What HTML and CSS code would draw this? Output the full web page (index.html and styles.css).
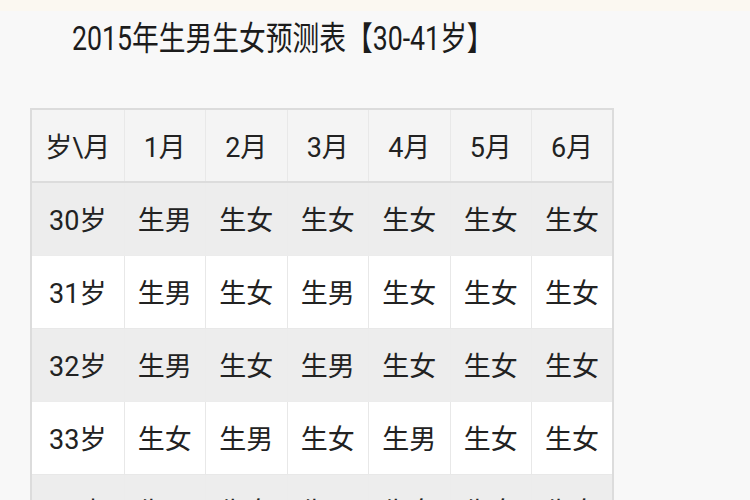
FILE: index.html
```html
<!DOCTYPE html>
<html lang="zh">
<head>
<meta charset="utf-8">
<link rel="stylesheet" href="styles.css">
</head>
<body>
<div class="band"></div>
<h1 class="title"><span class="title-text">2015年生男生女预测表【30-41岁】</span></h1>
<table class="chart">
  <thead>
    <tr><th class="first">岁\月</th><th>1月</th><th>2月</th><th>3月</th><th>4月</th><th>5月</th><th>6月</th></tr>
  </thead>
  <tbody>
    <tr class="alt"><td>30岁</td><td>生男</td><td>生女</td><td>生女</td><td>生女</td><td>生女</td><td>生女</td></tr>
    <tr><td>31岁</td><td>生男</td><td>生女</td><td>生男</td><td>生女</td><td>生女</td><td>生女</td></tr>
    <tr class="alt"><td>32岁</td><td>生男</td><td>生女</td><td>生男</td><td>生女</td><td>生女</td><td>生女</td></tr>
    <tr><td>33岁</td><td>生女</td><td>生男</td><td>生女</td><td>生男</td><td>生女</td><td>生女</td></tr>
    <tr class="alt"><td>34岁</td><td>生男</td><td>生女</td><td>生男</td><td>生女</td><td>生女</td><td>生女</td></tr>
  </tbody>
</table>
</body>
</html>
```

FILE: styles.css
```css
html, body {
  margin: 0;
  padding: 0;
  background: #f8f8f8;
  font-family: Roboto, "Noto Sans CJK SC", sans-serif;
  color: #222;
  overflow: hidden;
}
.band {
  height: 11px;
  background: #fbf8f1;
}
.title {
  margin: 6px 0 0 0;
  padding-left: 72px;
  font-size: 33px;
  font-weight: normal;
  line-height: 44px;
  color: #1c1c1c;
  white-space: nowrap;
}
.title-text {
  display: inline-block;
  transform: scaleX(0.81);
  transform-origin: left center;
}
.chart {
  margin: 47px 0 0 30px;
  border-collapse: collapse;
  border: 2px solid #dcdcdc;
  width: 582px;
  table-layout: fixed;
}
.chart th, .chart td {
  height: 73px;
  padding: 0;
  text-align: center;
  vertical-align: middle;
  font-size: 27px;
  font-weight: normal;
  border: 1px solid #e8e8e8;
  box-sizing: border-box;
}
.chart th {
  width: 81.5px;
  background: #f4f4f4;
  border-bottom: 2px solid #dcdcdc;
}
.chart th.first {
  width: 93px;
}
.chart tbody tr {
  background: #ffffff;
}
.chart tbody tr.alt {
  background: #ededed;
}
.chart tbody tr.alt td {
  border-color: #ececec;
}
```
